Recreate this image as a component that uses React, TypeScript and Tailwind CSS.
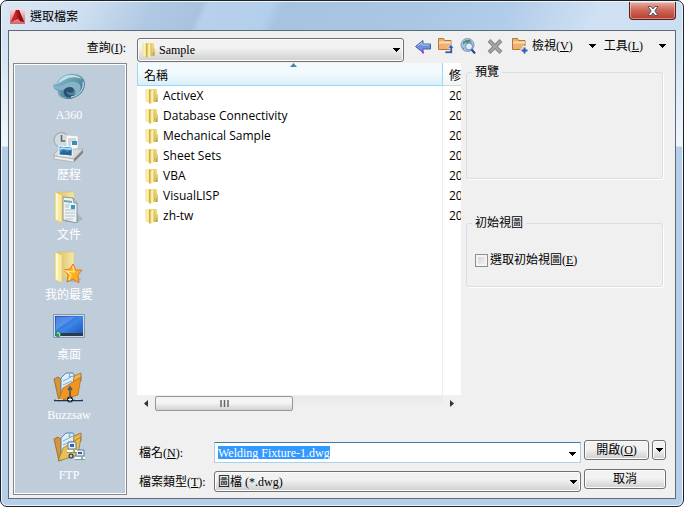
import { useState } from "react";
import type { ReactNode } from "react";

interface Place {
  name: string;
  icon: ReactNode;
}

const FolderIcon = ({ className }: { className?: string }) => (
  <svg viewBox="0 0 16 16" className={`h-4 w-4 shrink-0 ${className ?? ""}`}>
    <defs>
      <linearGradient id="folderFront" x1="0" x2="1">
        <stop offset="0" stopColor="#f3e28f" />
        <stop offset=".6" stopColor="#fbf2bb" />
        <stop offset="1" stopColor="#ead476" />
      </linearGradient>
      <linearGradient id="folderBack" x1="0" x2="0" y2="1">
        <stop offset="0" stopColor="#f0dc86" />
        <stop offset="1" stopColor="#dcbb48" />
      </linearGradient>
    </defs>
    <path d="M5 1h8v5l1 1v7H6z" fill="url(#folderBack)" />
    <path d="M1.500 1h4v14l-4-1.500z" fill="url(#folderFront)" />
    <path d="M5 1.500l2 .5v14l-2-1z" fill="#cfae42" />
    <path d="M6.500 3l3.500-2v13L6.500 16z" fill="url(#folderFront)" />
    <path d="M10 1.500v12.500" stroke="#d9bf5c" strokeWidth=".8" />
    <path d="M12.500 10.500v3" stroke="#69b4c9" strokeWidth="1" />
  </svg>
);

const A360Icon = () => (
  <svg viewBox="0 0 32 32" className="h-8 w-8">
    <defs>
      <linearGradient id="swirl" x1="0" x2="1" y2="1">
        <stop offset="0" stopColor="#9ccbd8" />
        <stop offset=".5" stopColor="#5f96ac" />
        <stop offset="1" stopColor="#34607f" />
      </linearGradient>
    </defs>
    <path d="M0 14c5-1 5-9 16-11 9-1 16 3 16 10 0 8-8 15-17 15-7 0-11-4-10-8-3-1-5-3-5-6z" fill="url(#swirl)" />
    <path d="M9 7c5-4 15-4 20 1-7-3-14-2-18 1-4 2-6 4-9 4 4-1 4-4 7-6z" fill="#c3e3ea" />
    <path d="M1 15c4 1 7 0 11-2 5-3 12-3 15 1 2 4-1 9-6 10 2-2 2-5-1-6-4-2-8 1-12 1-4 0-6-2-7-4z" fill="#86b4c6" />
    <path d="M11 19c2-4 10-4 10 0 0 3-6 4-7 1-1 4 4 5 8 4-6 5-13 1-11-5z" fill="#2a4f70" />
    <path d="M30 11c2 6-4 14-12 15" fill="none" stroke="#a5d0dc" strokeWidth="1.500" />
    <path d="M6 21c0 4 3 6 7 6" fill="none" stroke="#8cb7c8" />
  </svg>
);

const HistoryIcon = () => (
  <svg viewBox="0 0 32 32" className="h-8 w-8">
    <circle cx="8.500" cy="9" r="7.500" fill="#d3dcdf" stroke="#a9b3b8" strokeWidth="1.500" />
    <path d="M8.500 4v6h4" fill="none" stroke="#596873" strokeWidth="1.500" />
    <path d="M13 4l12 1v19l-12-1z" fill="#f8f9fa" stroke="#c1cad0" strokeWidth=".7" />
    <path d="M15 8h8M15 10h8M15 12h3M15 14h3" stroke="#aab5bd" />
    <path d="M19 10h5v4h-5z" fill="#358dbc" />
    <path d="M1 23l5-5 24 0-9 10L1 26z" fill="#d8dbdc" stroke="#a1a6a8" strokeWidth=".7" />
    <path d="M6 15l13 1v9L6 24z" fill="#2e91d4" stroke="#fff" />
    <path d="M6.500 23l4-4 4 2 4-3v6.500z" fill="#2f6488" />
    <path d="M7 17c4-2 6 1 11 0v2c-5 0-7-2-11 0z" fill="#b7e6f8" />
    <path d="M1 25l20 3v3L1 28z" fill="#eee" stroke="#9a9fa2" strokeWidth=".6" />
    <path d="M21 28l9-9v3l-9 9z" fill="#87807a" />
  </svg>
);

const FolderShell = ({ children }: { children: ReactNode }) => (
  <svg viewBox="0 0 32 32" className="h-8 w-8">
    <defs>
      <linearGradient id="shellBack" x1="0" x2="1">
        <stop offset="0" stopColor="#dcc168" />
        <stop offset="1" stopColor="#f5e9a8" />
      </linearGradient>
    </defs>
    <path d="M22 20l8 8-5 3H12z" fill="#8798a7" opacity=".45" />
    <path d="M5 1h16v26H8z" fill="url(#shellBack)" stroke="#d9c37a" strokeWidth=".7" />
    {children}
    <path d="M2 1l7 3v28l-7-3z" fill="#f9eb9f" stroke="#dcc673" strokeWidth=".7" />
    <path d="M3 2l2 1v26l-2-1z" fill="#fff9d2" />
  </svg>
);

const DocumentsIcon = () => (
  <FolderShell>
    <path d="M10 6l10 1 4 5v20l-14-3z" fill="#eef2f3" stroke="#71828e" strokeWidth=".8" />
    <path d="M20 7l1 5h3" fill="#bcc9d1" stroke="#71828e" strokeWidth=".8" />
    <path d="M12 14h5M12 16h4M12 19h10M12 22h10M12 25h10M12 28h8" stroke="#b4bfc8" />
    <path d="M18 14h4v4h-4z" fill="#339bc4" />
    <path d="M11 9l8 1v2l-8-1z" fill="#6aa9ae" />
  </FolderShell>
);

const FavoritesIcon = () => (
  <svg viewBox="0 0 32 32" className="h-8 w-8">
    <path d="M15 29l14-2-4 4H13z" fill="#8798a7" opacity=".45" />
    <path d="M5 1h16v26H8z" fill="url(#shellBack)" stroke="#d9c37a" strokeWidth=".7" />
    <path d="M2 1l7 3v28l-7-3z" fill="#f9eb9f" stroke="#dcc673" strokeWidth=".7" />
    <path d="M3 2l2 1v26l-2-1z" fill="#fff9d2" />
    <path d="M20 13l3 6 6 0-4 5 1 8-6-4-6 3 1-7-4-5 6-1z" fill="#ffae22" stroke="#df681b" strokeWidth=".8" />
    <path d="M20 15l1 6-8-1 5 4-2 5" fill="none" stroke="#ffe67b" strokeWidth="1.500" />
  </svg>
);

const DesktopIcon = () => (
  <svg viewBox="0 0 32 32" className="h-8 w-8">
    <defs>
      <linearGradient id="screen" x1="0" y1="0" x2="1" y2="1">
        <stop offset="0" stopColor="#1c54c4" />
        <stop offset=".5" stopColor="#3b86e8" />
        <stop offset="1" stopColor="#1f4fb8" />
      </linearGradient>
    </defs>
    <path d="M.5 3.500h31v23H.5z" fill="#d5dbe3" stroke="#8796ad" />
    <path d="M2 5h28v20H2z" fill="url(#screen)" />
    <path d="M3 6h19L3 19z" fill="#9ec9ff" opacity=".35" />
    <path d="M2 22h28v3H2z" fill="#2a3b4c" />
    <circle cx="5" cy="23" r="3" fill="#168fa1" />
    <path d="M4 21h2v2H4z" fill="#8cdb51" />
    <path d="M6 22h1v3H6z" fill="#efc642" />
  </svg>
);

const PaperFolder = ({ front }: { front: string }) => (
  <>
    <path d="M1 8l4-2 4 3v20l-3 1z" fill="#d9953a" stroke="#8c6326" strokeWidth=".8" />
    <path d="M8 24L8 7l5-5h7l2 4v16z" fill="#dceefa" stroke="#3b6f9d" strokeWidth=".8" />
    <path d="M10 10l8-4M10 14l9-4M10 18l8-4M17 2l-1 4 5-1" fill="none" stroke="#7fa9c9" />
    <path d="M21 5l7-3v8l-8 4z" fill="#edb648" stroke="#9a6d24" strokeWidth=".8" />
    <path d="M5 30l5-13 18-11-3 18-13 4z" fill={front} stroke="#9a6d24" strokeWidth=".7" />
  </>
);

const BuzzsawIcon = () => (
  <svg viewBox="0 0 32 32" className="h-8 w-8">
    <PaperFolder front="#f4941e" />
    <path d="M17 28V17M15 19l2-3 2 3" fill="none" stroke="#4c5a6b" strokeWidth="1.700" />
    <path d="M1 29.500h29" stroke="#1d3359" strokeWidth="1.500" />
    <path d="M3 28.500h7M22 28.500h6" stroke="#c5d6ea" />
    <circle cx="17" cy="28.500" r="3" fill="#222" />
    <path d="M15 28.500h4M17 26.500v4" stroke="#fff" />
  </svg>
);

const FtpIcon = () => (
  <svg viewBox="0 0 32 32" className="h-8 w-8">
    <PaperFolder front="#e3c157" />
    <path d="M15 11h8v7h-8zM23 19h8v6h-8z" fill="#e8eef2" stroke="#6c7e8c" />
    <path d="M17 13h4v3h-4zM25 21h4v2h-4z" fill="#2a68b2" />
    <path d="M14 20h10M22 27h10" stroke="#fff" strokeWidth="2" />
    <path d="M14 21.500h10M22 28.500h10" stroke="#6c7e8c" strokeWidth=".7" />
    <path d="M21 19v2M29 26v2" stroke="#40bd3d" strokeWidth="1.500" />
    <circle cx="18" cy="25" r="2.500" fill="#252b35" />
    <path d="M16.500 25h3M18 23.500v3" stroke="#fff" />
  </svg>
);

const BackIcon = () => (
  <svg viewBox="0 0 16 16" className="h-4 w-4">
    <path d="M.5 8.500L8 2.500V6h7.500v5H8v3.500z" fill="#6d90d8" stroke="#4560a6" />
    <path d="M2.500 8L7 4.500v2.500h7.500" fill="none" stroke="#b3c8f2" />
    <path d="M7 13.500h2v2H7z" fill="#f0f" />
  </svg>
);

const OrangeFolder = ({ children }: { children: ReactNode }) => (
  <svg viewBox="0 0 17 17" className="h-[17px] w-[17px]">
    <path d="M1.500 12.500v-11h5l1 2h6.500v9z" fill="#efb070" stroke="#b0763b" />
    <path d="M2 5.500h12" stroke="#fbdcb2" strokeWidth="2" />
    {children}
  </svg>
);

const UpFolderIcon = () => (
  <OrangeFolder>
    <path d="M8 14h5v-3h-2.500L14 7.500 17 11h-1.500v5.500H8z" fill="#3158b2" stroke="#f0f0f0" strokeWidth=".7" />
  </OrangeFolder>
);

const NewFolderIcon = () => (
  <OrangeFolder>
    <path d="M13.500 9v8M9.500 13.500h7.500" stroke="#f0f0f0" strokeWidth="4" />
    <path d="M13.500 10.500v6M10.500 13.500h6" stroke="#3158b2" strokeWidth="2" />
  </OrangeFolder>
);

const SearchWebIcon = () => (
  <svg viewBox="0 0 16 16" className="h-4 w-4">
    <circle cx="7.500" cy="7" r="6.500" fill="#a9c3e6" stroke="#7d97c3" />
    <path d="M3 4l3-2h4l2 3-3-1-2 2-1-2-3 3z" fill="#4d8f72" />
    <path d="M2 9l2 1v2z" fill="#5f9d80" />
    <circle cx="9" cy="8.500" r="3.500" fill="#dcebf6" stroke="#7088b0" />
    <path d="M11.500 11.500L15 15.500" stroke="#23448c" strokeWidth="2" />
  </svg>
);

const DeleteIcon = () => (
  <svg viewBox="0 0 16 16" className="h-4 w-4">
    <path d="M2 2.500l12 12M14 2.500l-12 12" stroke="#858585" strokeWidth="4" />
    <path d="M2.500 3l11 11M13.500 3l-11 11" stroke="#a6a6a6" strokeWidth="2" />
  </svg>
);

const Caret = ({ className }: { className?: string }) => (
  <svg viewBox="0 0 7 4" className={`h-1 w-[7px] ${className ?? ""}`} shapeRendering="crispEdges">
    <path d="M0 0h7L3.500 4z" fill="#000" />
  </svg>
);

const places: Place[] = [
  { name: "A360", icon: <A360Icon /> },
  { name: "歷程", icon: <HistoryIcon /> },
  { name: "文件", icon: <DocumentsIcon /> },
  { name: "我的最愛", icon: <FavoritesIcon /> },
  { name: "桌面", icon: <DesktopIcon /> },
  { name: "Buzzsaw", icon: <BuzzsawIcon /> },
  { name: "FTP", icon: <FtpIcon /> },
];

const folders = [
  "ActiveX",
  "Database Connectivity",
  "Mechanical Sample",
  "Sheet Sets",
  "VBA",
  "VisualLISP",
  "zh-tw",
];

const buttonStyle =
  "flex h-5 items-center justify-center rounded-[3px] border border-[#707070] bg-linear-to-b from-[#f2f2f2] from-45% to-[#cfcfcf] shadow-[inset_0_0_0_1px_#fcfcfc]";

const selectStyle =
  "w-full appearance-none rounded-[3px] border border-[#707070] bg-linear-to-b from-[#f2f2f2] from-40% to-[#cfcfcf] shadow-[inset_0_0_0_1px_#fcfcfc] outline-none";

const TitleBar = () => (
  <header className="flex h-7 items-start justify-between rounded-t-[6px] bg-[linear-gradient(115deg,#d9e6f4_0%,#cfdff0_12%,#b0c9e3_22%,#a9c3df_29%,#b7d1ec_30%,#b4cfeb_39%,#a8c3df_41%,#aac6e2_60%,#b2cdea_74%,#d0e1f3_87%,#cbdef2_100%)] pr-[6px] pl-2">
    <div className="flex h-7 items-center gap-[5px]">
      <svg viewBox="0 0 15 15" className="h-[15px] w-[15px]">
        <defs>
          <linearGradient id="logoBack" x1="0" x2="0" y2="1">
            <stop offset="0" stopColor="#f3dede" />
            <stop offset="1" stopColor="#d2656a" />
          </linearGradient>
        </defs>
        <path d="M0 0h15v15H0z" fill="url(#logoBack)" />
        <path d="M6 1h3l5 12-4-1-2-2-3 1-4 2z" fill="#b3141f" />
        <path d="M6 1L1 13l6-4z" fill="#cf2530" />
        <path d="M8 1h1l5 12-4-1z" fill="#8a0d17" />
      </svg>
      <h1 className="font-['Noto_Sans_CJK_TC',sans-serif] text-xs">選取檔案</h1>
    </div>
    <button
      aria-label="關閉"
      className="flex h-[18px] w-[47px] items-center justify-center rounded-b-[4px] border border-t-0 border-[#5a1d18] bg-linear-to-b from-[#e3b0a6] from-0% via-[#cf6a5b] via-45% to-[#b83a2a] shadow-[inset_0_0_0_1px_#ffffff66]"
    >
      <svg viewBox="0 0 12 10" className="h-[10px] w-3">
        <path d="M1 .5h3l2 2.500L8 .5h3L7.800 5 11 9.500H8L6 7 4 9.500H1L4.200 5z" fill="#fff" stroke="#535666" />
      </svg>
    </button>
  </header>
);

const ToolBar = () => (
  <div className="flex items-center">
    <div className="flex items-center gap-[6px]">
      <button aria-label="上一頁"><BackIcon /></button>
      <button aria-label="上一層"><UpFolderIcon /></button>
      <button aria-label="搜尋網頁"><SearchWebIcon /></button>
    </div>
    <button aria-label="刪除" className="ml-[11px]"><DeleteIcon /></button>
    <button aria-label="建立新資料夾" className="ml-2"><NewFolderIcon /></button>
    <button className="ml-1 flex items-center gap-4">
      <span>檢視(<u>V</u>)</span>
      <Caret />
    </button>
    <button className="ml-2 flex items-center gap-4">
      <span>工具(<u>L</u>)</span>
      <Caret />
    </button>
  </div>
);

const FileList = () => (
  <div className="flex min-w-0 flex-1 flex-col bg-white">
    <div className="flex-1 overflow-hidden bg-[linear-gradient(to_right,transparent_305px,#e5f0fb_305px,#e5f0fb_306px,transparent_306px)]">
      <table className="w-full table-fixed border-separate border-spacing-0 font-['Open_Sans','Noto_Sans_CJK_TC',sans-serif] text-xs">
        <colgroup>
          <col className="w-[306px]" />
          <col />
        </colgroup>
        <thead>
          <tr className="h-[23px] text-left">
            <th className="relative border-r border-b border-l border-[#96d9f9] bg-linear-to-b from-[#f3fafd] from-45% to-[#d9eef8] p-0 pt-[3px] pl-[6px] font-normal">
              名稱
              <svg viewBox="0 0 7 4" className="absolute top-0 left-1/2 h-1 w-[7px]">
                <path d="M3.500 0L7 4H0z" fill="#4c87a5" />
              </svg>
            </th>
            <th className="border-b border-[#d5d5d5] bg-linear-to-b from-white to-[#f3f4f5] p-0 pt-[3px] pl-[6px] font-normal">修</th>
          </tr>
        </thead>
        <tbody>
          {folders.map((folder) => (
            <tr key={folder} className="h-5">
              <td className="p-0 pl-[7px]">
                <div className="flex h-5 items-center gap-[3px]">
                  <FolderIcon />
                  {folder}
                </div>
              </td>
              <td className="p-0 pl-[6px]">20</td>
            </tr>
          ))}
        </tbody>
      </table>
    </div>
    <div className="flex h-4 items-center bg-[#f0f0f0]">
      <button aria-label="向左捲動" className="flex w-[18px] justify-center">
        <svg viewBox="0 0 4 7" className="h-[7px] w-1"><path d="M4 0v7L0 3.500z" fill="#333" /></svg>
      </button>
      <div className="flex-1 bg-linear-to-b from-[#e9e9e9] to-[#f2f2f2]">
        <div className="flex h-[15px] w-[48%] items-center justify-center rounded-[2px] border border-[#969696] bg-linear-to-b from-[#f4f4f4] from-45% to-[#d2d2d2]">
          <svg viewBox="0 0 9 7" className="h-[7px] w-[9px]">
            <path d="M1 0v7M4.500 0v7M8 0v7" stroke="#666" strokeWidth="1.500" />
          </svg>
        </div>
      </div>
      <button aria-label="向右捲動" className="flex w-[18px] justify-center">
        <svg viewBox="0 0 4 7" className="h-[7px] w-1"><path d="M0 0v7l4-3.500z" fill="#333" /></svg>
      </button>
    </div>
  </div>
);

export default function App() {
  const [fileName, setFileName] = useState("Welding Fixture-1.dwg");
  const [useInitialView, setUseInitialView] = useState(false);

  return (
    <div className="min-h-screen bg-white font-['Liberation_Serif','Noto_Sans_CJK_TC',serif] text-xs text-black">
      <div className="flex min-h-screen flex-col rounded-[7px] border border-[#1d2228] bg-[linear-gradient(to_bottom,#cfe0f2_0px,#d6e5f4_60px,#f0f6fc_145px,#b5cfe9_146px,#b5cfe9_100%)] p-px shadow-[inset_0_0_0_1px_#eef6fd]">
        <TitleBar />
        <main className="mx-[6px] mb-[6px] flex flex-1 flex-col border border-[#5c6b7a] bg-[#f0f0f0] pb-[3px] pl-1">
          <div className="flex items-start pt-1">
            <label htmlFor="folder" className="mt-[3px] w-[124px] pr-[11px] text-right leading-5">
              查詢(<u>I</u>):
            </label>
            <div className="relative mt-[3px] flex-1">
              <FolderIcon className="absolute top-1 left-1" />
              <select id="folder" className={`${selectStyle} h-6 pl-[21px]`}>
                <option>Sample</option>
              </select>
              <Caret className="pointer-events-none absolute top-[10px] right-1" />
            </div>
            <div className="ml-[11px] w-[260px] pt-[2px]">
              <ToolBar />
            </div>
          </div>

          <div className="mt-px flex flex-1 gap-[10px]">
            <nav className="w-[114px] shrink-0 border border-[#848890] bg-[#bfcddb] pt-[7px] pr-[2px] shadow-[inset_0_0_0_1px_#fff]">
              {places.map((place) => (
                <button key={place.name} className="flex h-[60px] w-full flex-col items-center gap-1 text-white">
                  {place.icon}
                  <span>{place.name}</span>
                </button>
              ))}
            </nav>

            <div className="flex min-w-0 flex-1 flex-col">
              <div className="flex h-[348px] gap-[5px] pr-3">
                <FileList />
                <div className="flex w-[197px] flex-col">
                  <fieldset className="h-[116px] rounded-[3px] border border-[#d5dfe5] px-[5px] shadow-[1px_1px_0_#fff]">
                    <legend className="px-[3px] leading-[18px]">預覽</legend>
                  </fieldset>
                  <fieldset className="mt-[35px] h-[73px] rounded-[3px] border border-[#d5dfe5] px-[5px] shadow-[1px_1px_0_#fff]">
                    <legend className="px-[3px] leading-[18px]">初始視圖</legend>
                    <label className="mt-5 flex items-center gap-[2px] pl-[3px]">
                      <input
                        type="checkbox"
                        checked={useInitialView}
                        onChange={(e) => setUseInitialView(e.target.checked)}
                        className="h-[13px] w-[13px] appearance-none border border-[#8e8f8f] bg-linear-to-br from-[#cfd1d4] to-[#f6f6f6] shadow-[inset_0_0_0_2px_#f4f4f4] checked:bg-[#4c87a5]"
                      />
                      <span>選取初始視圖(<u>E</u>)</span>
                    </label>
                  </fieldset>
                </div>
              </div>

              <div className="mt-7 flex gap-[3px] pr-[9px]">
                <div className="grid flex-1 grid-cols-[77px_1fr] gap-y-2 pt-[3px]">
                  <label htmlFor="file-name" className="self-center pl-[2px]">檔名(<u>N</u>):</label>
                  <div className="relative flex h-[21px] items-center border border-[#a9cfea] border-t-[#3d7bad] bg-white pl-[3px]">
                    <input
                      id="file-name"
                      value={fileName}
                      onChange={(e) => setFileName(e.target.value)}
                      className="field-sizing-content h-[13px] bg-[#3399ff] text-white outline-none"
                    />
                    <Caret className="absolute top-[9px] right-1" />
                  </div>
                  <label htmlFor="file-type" className="self-center pl-[2px]">檔案類型(<u>T</u>):</label>
                  <div className="relative">
                    <select id="file-type" className={`${selectStyle} h-[21px] pl-[3px]`}>
                      <option>圖檔 (*.dwg)</option>
                    </select>
                    <Caret className="pointer-events-none absolute top-[9px] right-1" />
                  </div>
                </div>
                <div className="flex w-[82px] flex-col gap-[9px] pt-px">
                  <div className="flex gap-[3px]">
                    <button className={`${buttonStyle} flex-1`}>開啟(<u>O</u>)</button>
                    <button aria-label="開啟選項" className={`${buttonStyle} w-[14px]`}><Caret /></button>
                  </div>
                  <button className={buttonStyle}>取消</button>
                </div>
              </div>
            </div>
          </div>
        </main>
      </div>
    </div>
  );
}
